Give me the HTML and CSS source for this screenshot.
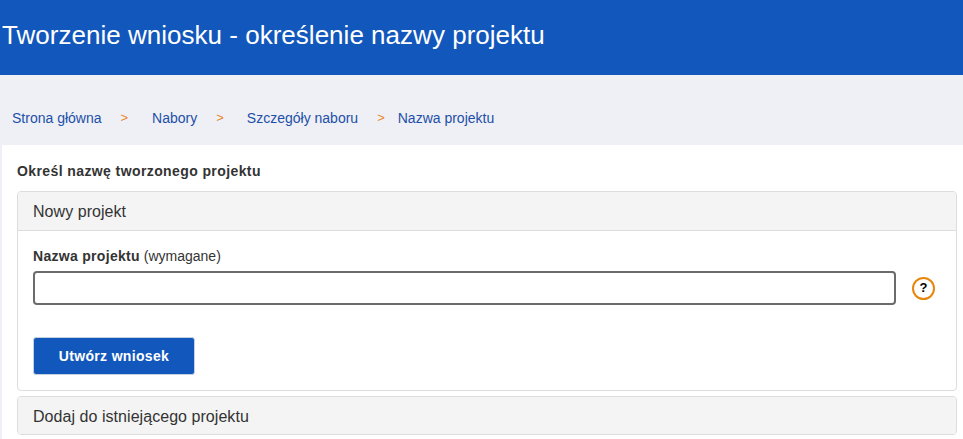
FILE: index.html
```html
<!DOCTYPE html>
<html lang="pl">
<head>
<meta charset="utf-8">
<title>Tworzenie wniosku</title>
<link rel="stylesheet" href="styles.css">
</head>
<body>
<header class="banner"><h1 class="banner-title">Tworzenie wniosku - określenie nazwy projektu</h1></header>
<nav class="crumbs">
  <a class="crumb crumb-home" href="#">Strona główna</a><span class="sep sep-a">&gt;</span>
  <a class="crumb" href="#">Nabory</a><span class="sep sep-c">&gt;</span>
  <a class="crumb" href="#">Szczegóły naboru</a><span class="sep sep-b">&gt;</span>
  <a class="crumb" href="#">Nazwa projektu</a>
</nav>
<main class="content">
  <h2 class="lead">Określ nazwę tworzonego projektu</h2>
  <section class="panel">
    <div class="panel-head">Nowy projekt</div>
    <div class="panel-body">
      <label class="field-label" for="name"><b>Nazwa projektu</b> (wymagane)</label>
      <div class="field-row">
        <input class="field-input" id="name" type="text">
        <span class="help">?</span>
      </div>
      <button class="submit" type="button">Utwórz wniosek</button>
    </div>
  </section>
  <section class="panel panel-closed">
    <div class="panel-head panel-head-closed">Dodaj do istniejącego projektu</div>
  </section>
</main>
</body>
</html>
```
FILE: styles.css
```css
* { box-sizing: border-box; }
html, body { margin: 0; padding: 0; height: 100%; overflow: hidden; }
body { background: #eff0f5; font-family: "Liberation Sans", Arial, sans-serif; color: #333; }
.banner { height: 75px; background: #1257bb; padding: 20px 0 0 2px; }
.banner-title { margin: 0; font-size: 26px; line-height: 30px; font-weight: 400; color: #fff; letter-spacing: 0.02px; }
.crumbs { height: 70px; padding: 34px 0 0 12px; display: flex; align-items: flex-start; font-size: 14px; line-height: 18px; }
.crumb { color: #1d4fa8; text-decoration: none; }
.sep { color: #e8862a; font-size: 13px; }
.sep-a { margin: 0 24px 0 19px; }
.sep-c { margin: 0 23px 0 19px; }
.sep-b { margin: 0 13px 0 19px; }
.content { margin-left: 2px; background: #fff; padding: 18px 6px 0 15px; height: 294px; }
.lead { margin: 0 0 12px; font-size: 14px; line-height: 16px; font-weight: 700; color: #333; letter-spacing: 0.4px; }
.panel { border: 1px solid #ddd; border-radius: 4px; background: #fff; }
.panel-closed { margin-top: 5px; }
.panel-head { height: 39px; padding: 0 15px; background: #f4f4f4; border-bottom: 1px solid #ddd; border-radius: 3px 3px 0 0; font-size: 16px; line-height: 39px; color: #333; letter-spacing: 0.05px; }
.panel-head-closed { height: 37px; border-bottom: 0; border-radius: 3px; line-height: 39px; }
.panel-body { height: 159px; padding: 17px 15px 0; }
.field-label { display: block; font-size: 14px; line-height: 16px; color: #333; }
.field-label b { font-size: 14px; letter-spacing: 0.3px; }
.field-row { display: flex; align-items: center; margin-top: 7px; }
.field-input { width: 863px; height: 34px; border: 2px solid #6b6b6b; border-radius: 4px; background: #fff; padding: 0 8px; }
.help { width: 23px; height: 23px; margin-left: 16px; border: 2px solid #e8860c; border-radius: 50%; font-size: 13px; font-weight: 700; line-height: 18px; text-align: center; color: #000; }
.submit { display: block; width: 162px; height: 38px; margin-top: 32px; border: 1px solid #c4d0e4; border-radius: 3px; background: #1257bb; color: #fff; font-family: inherit; font-size: 14px; font-weight: 700; letter-spacing: 0.33px; }
```
